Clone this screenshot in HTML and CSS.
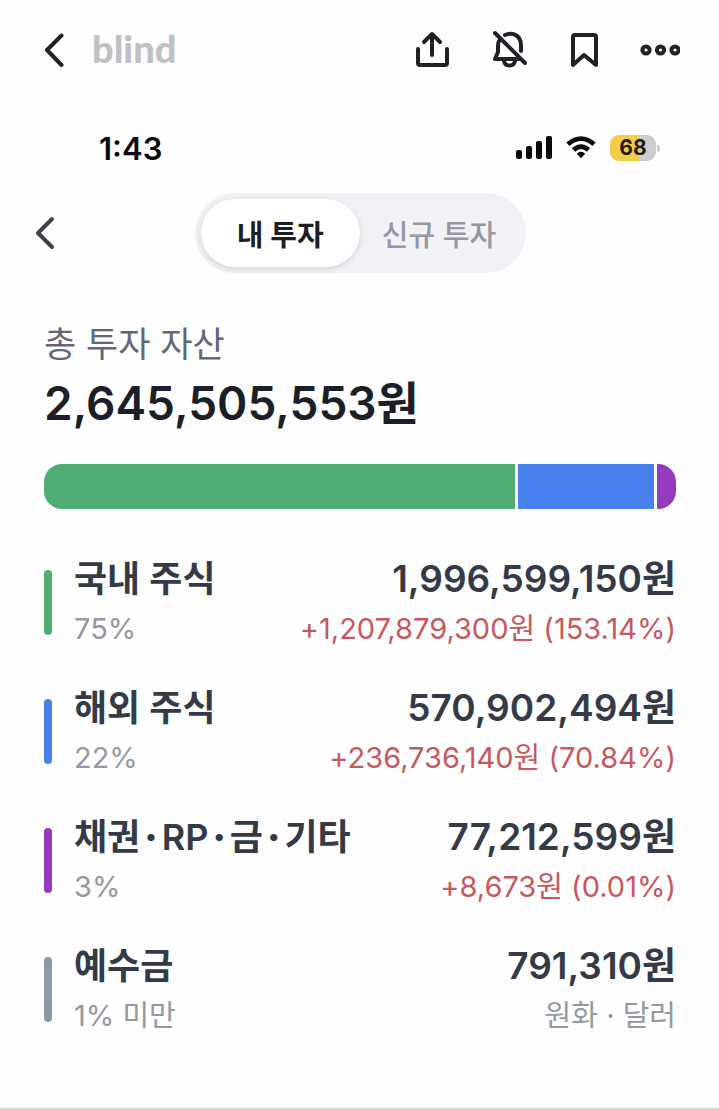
FILE: index.html
```html
<!DOCTYPE html>
<html lang="ko">
<head>
  <meta charset="UTF-8" />
  <meta name="viewport" content="width=device-width, initial-scale=1.0"/>
  <title>내 투자</title>
  <link rel="stylesheet" href="styles.css">
</head>
<body>
  <div class="page">

    <!-- App bar -->
    <header class="app-bar">
      <button class="icon-button" type="button" aria-label="뒤로">
        <svg width="20" height="36" viewBox="0 0 20 36"><path d="M17.500 3.500 L3 18 L17.500 33"/></svg>
      </button>
      <a href="#" class="logo">blind</a>
      <div class="actions">
        <button class="icon-button" type="button" aria-label="공유">
          <svg width="36" height="40" viewBox="0 0 36 40"><path d="M4 19 V33 Q4 35 6 35 H31 Q33 35 33 33 V19 M18 25 V4 M10 12 L18 4 L26 12"/></svg>
        </button>
        <button class="icon-button" type="button" aria-label="알림 끄기">
          <svg width="36" height="40" viewBox="0 0 36 40"><path d="M3 3 L33 33 M8 9 Q6 12 6 16 V22 L3 29 H27 M13 5 C22 1 29 7 29 15 V21 M12 31 C13 37 22 37 23 31"/></svg>
        </button>
        <button class="icon-button" type="button" aria-label="북마크">
          <svg width="28" height="40" viewBox="0 0 28 40"><path d="M3 35 V7 Q3 5 5 5 H24 Q26 5 26 7 V35 L14 25 Z"/></svg>
        </button>
        <button class="icon-button" type="button" aria-label="더보기">
          <svg width="40" height="40" viewBox="0 0 40 40"><circle cx="6" cy="20" r="3.600"/><circle cx="20.500" cy="20" r="3.600"/><circle cx="35" cy="20" r="3.600"/></svg>
        </button>
      </div>
    </header>

    <!-- Phone status bar -->
    <div class="status-bar">
      <span class="time">1:43</span>
      <div class="status-icons">
        <svg class="solid" width="36" height="24" viewBox="0 0 36 24">
          <rect x="0" y="14" width="6" height="9" rx="2"/><rect x="10" y="10" width="6" height="13" rx="2"/><rect x="20" y="5" width="6" height="18" rx="2"/><rect x="30" y="0" width="6" height="23" rx="2"/>
        </svg>
        <svg class="wifi" width="30" height="24" viewBox="0 0 32 24">
          <path d="M2 8 Q16 -4 30 8"/><path d="M8 14 Q16 7 24 14"/><path class="solid" d="M11.500 18 Q16 14 20.500 18 L16 23 Z"/>
        </svg>
        <div class="battery"><span class="battery-level">68</span></div>
      </div>
    </div>

    <!-- Tabs -->
    <nav class="tab-row">
      <button class="icon-button dim" type="button" aria-label="이전">
        <svg width="20" height="36" viewBox="0 0 20 36"><path d="M17 4 L3 18 L17 32"/></svg>
      </button>
      <div class="tabs">
        <button class="tab active" type="button">내 투자</button>
        <button class="tab" type="button">신규 투자</button>
      </div>
    </nav>

    <main class="content">
      <h2 class="total-label">총 투자 자산</h2>
      <p class="total">2,645,505,553원</p>

      <div class="ratio">
        <span class="domestic"></span>
        <span class="overseas"></span>
        <span class="bonds"></span>
      </div>

      <ul class="assets">
        <li class="asset">
          <span class="marker domestic"></span>
          <div class="asset-info">
            <div class="main-line"><span class="name">국내 주식</span><span>1,996,599,150원</span></div>
            <div class="sub-line"><span>75%</span><span class="gain">+1,207,879,300원 (153.14%)</span></div>
          </div>
        </li>
        <li class="asset">
          <span class="marker overseas"></span>
          <div class="asset-info">
            <div class="main-line"><span class="name">해외 주식</span><span>570,902,494원</span></div>
            <div class="sub-line"><span>22%</span><span class="gain">+236,736,140원 (70.84%)</span></div>
          </div>
        </li>
        <li class="asset">
          <span class="marker bonds"></span>
          <div class="asset-info">
            <div class="main-line"><span class="name">채권<span class="dot">·</span>RP<span class="dot">·</span>금<span class="dot">·</span>기타</span><span>77,212,599원</span></div>
            <div class="sub-line"><span>3%</span><span class="gain">+8,673원 (0.01%)</span></div>
          </div>
        </li>
        <li class="asset">
          <span class="marker cash"></span>
          <div class="asset-info">
            <div class="main-line"><span class="name">예수금</span><span>791,310원</span></div>
            <div class="sub-line"><span>1% 미만</span><span>원화 · 달러</span></div>
          </div>
        </li>
      </ul>
    </main>
  </div>
</body>
</html>
```
FILE: styles.css
```css
* {
  box-sizing: border-box;
}

body {
  margin: 0;
  background-color: #fefefe;
  color: #343b47;
  font-family: Inter, "Noto Sans CJK KR", sans-serif;
}

.page {
  min-height: 100vh;
  border-bottom: 2px solid #d4d5d6;
}

button {
  padding: 0;
  border: 0;
  background: none;
  font-family: inherit;
}

svg {
  display: block;
  fill: none;
  stroke: #202124;
  stroke-width: 4;
  stroke-linecap: round;
  stroke-linejoin: round;
}

.app-bar {
  display: flex;
  align-items: center;
  height: 100px;
  padding: 0 39px 0 44px;
}

.logo {
  margin-left: 28px;
  padding-bottom: 4px;
  color: #c0c1c4;
  font-family: Lato, sans-serif;
  font-size: 38px;
  font-weight: 900;
  line-height: 40px;
  text-decoration: none;
}

.actions {
  display: flex;
  align-items: center;
  gap: 42px;
  margin-left: auto;
}

/* Status bar */
.status-bar {
  display: flex;
  align-items: center;
  justify-content: space-between;
  height: 93px;
  padding: 3px 63px 0 99px;
}

.time {
  color: #0a0a0a;
  font-size: 31px;
  font-weight: 600;
}

.status-icons {
  display: flex;
  align-items: center;
  gap: 14px;
}

.solid {
  fill: #0a0a0a;
  stroke: none;
}

.wifi {
  stroke: #0a0a0a;
  stroke-width: 5;
  stroke-linecap: butt;
}

.battery {
  position: relative;
  width: 46px;
  height: 26px;
  border-radius: 9px;
  background: linear-gradient(90deg, #f3cd48 66%, #cdcdcf 66%);
  text-align: center;
}

.battery::after {
  content: "";
  position: absolute;
  top: 10px;
  right: -4px;
  width: 3px;
  height: 7px;
  border-radius: 0 3px 3px 0;
  background-color: #cdcdcf;
}

.battery-level {
  color: #241c08;
  font-size: 21px;
  font-weight: 700;
  line-height: 26px;
}

/* Tabs */
.tab-row {
  display: grid;
  grid-template-columns: 1fr auto 1fr;
  align-items: center;
  padding: 0 33px 0 35px;
}

.dim svg {
  stroke: #3b424e;
}

.tabs {
  display: flex;
  padding: 6px;
  border-radius: 40px;
  background-color: #f1f2f5;
}

.tab {
  height: 68px;
  padding: 0 24px 0 22px;
  border-radius: 34px;
  color: #9498a3;
  font-size: 29px;
  font-weight: 500;
}

.tab.active {
  padding: 0 36px;
  background-color: #fff;
  box-shadow: 0 2px 6px rgba(30, 35, 60, 0.16);
  color: #1c1f24;
  font-weight: 700;
}

/* Totals */
.content {
  padding: 46px 43px 47px 44px;
}

.total-label {
  margin: 0;
  color: #606875;
  font-size: 35px;
  font-weight: 400;
  line-height: 51px;
}

.total {
  margin: 0;
  color: #1b1f27;
  font-size: 46px;
  font-weight: 600;
  line-height: 66px;
}

.ratio {
  display: grid;
  grid-template-columns: 472fr 136fr 19fr;
  gap: 3px;
  height: 45px;
  margin-top: 28px;
  border-radius: 18px;
  overflow: hidden;
}

.domestic {
  background-color: #50ad74;
}

.overseas {
  background-color: #4880ec;
}

.bonds {
  background-color: #943abd;
}

.cash {
  background-color: #8e98a3;
}

/* Asset list */
.assets {
  display: flex;
  flex-direction: column;
  gap: 29px;
  margin: 45px 0 0;
  padding: 0;
  list-style: none;
}

.asset {
  display: flex;
  align-items: center;
  gap: 22px;
}

.marker {
  width: 8px;
  height: 65px;
  margin-bottom: 4px;
  border-radius: 4px;
}

.asset-info {
  flex: 1;
}

.main-line,
.sub-line {
  display: flex;
  justify-content: space-between;
  line-height: 50px;
  white-space: nowrap;
}

.main-line {
  font-size: 37px;
  font-weight: 600;
}

.name {
  font-size: 36px;
}

.dot {
  margin: 0 4px;
  font-weight: 900;
}

.sub-line {
  color: #9499a0;
  font-size: 29px;
}

.gain {
  color: #c9585e;
}
```
